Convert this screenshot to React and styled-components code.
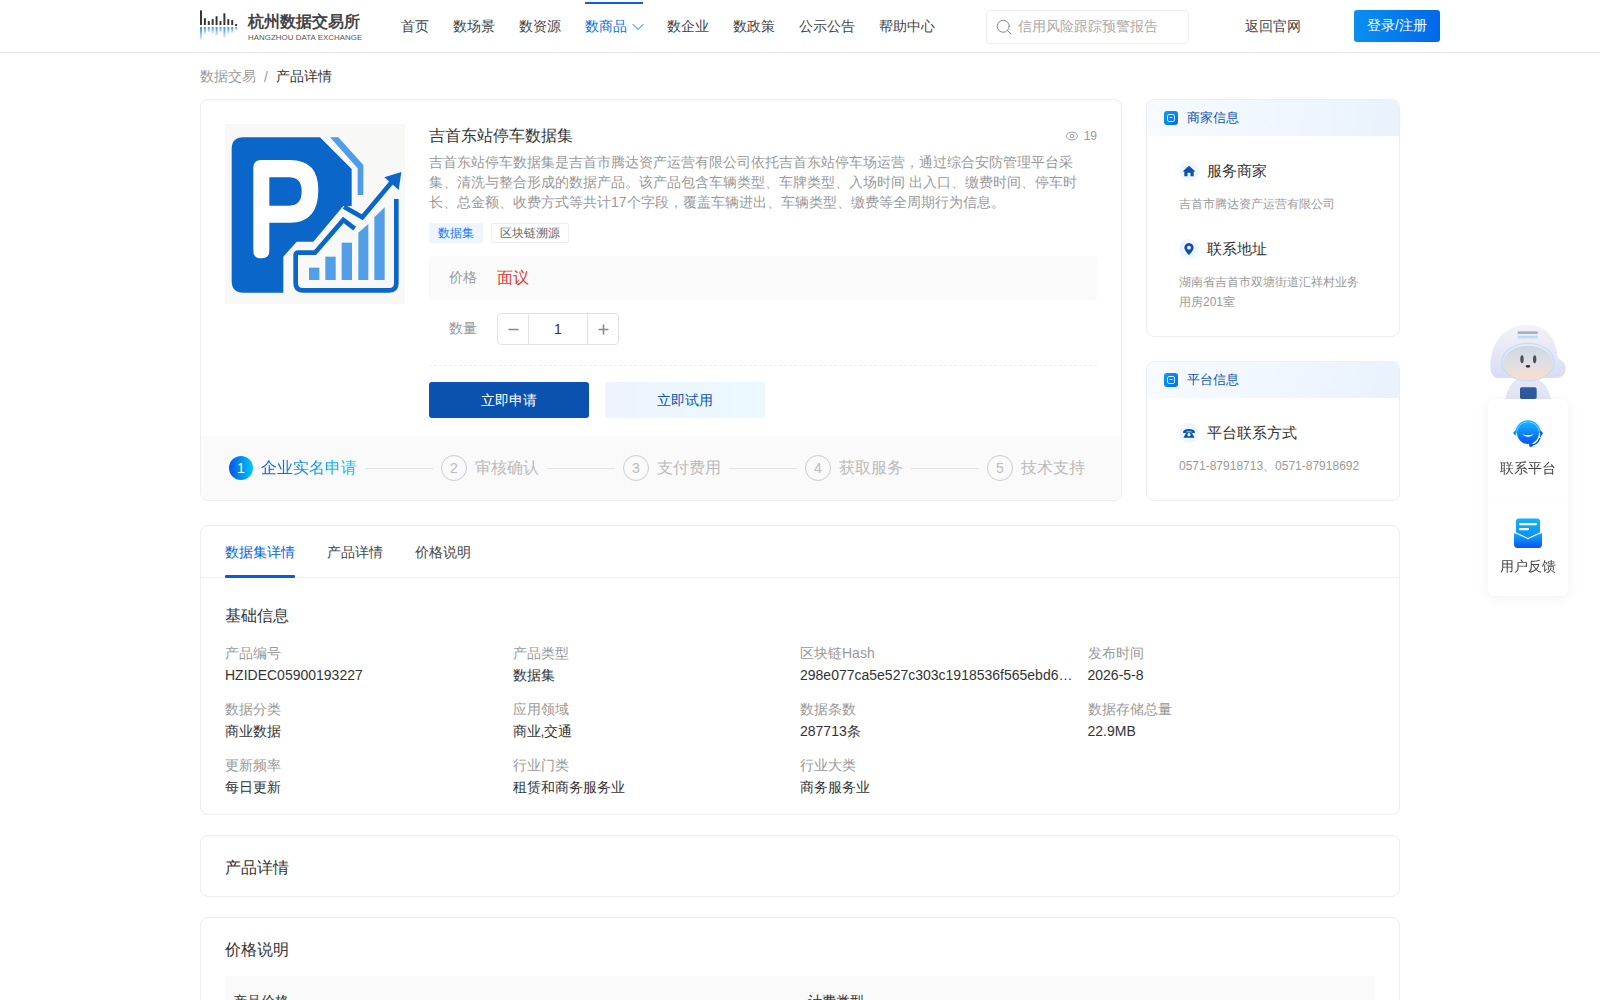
import React from 'react';
import styled, { createGlobalStyle } from 'styled-components';
import { Search, ChevronDown, Eye, Minus, Plus } from 'lucide-react';

const Global = createGlobalStyle`
  html, body { margin: 0; padding: 0; background: #fff; }
  body { font-family: "Liberation Sans", sans-serif; color: #333; font-size: 14px; }
  * { box-sizing: border-box; }
`;

const Header = styled.header`
  height: 53px; border-bottom: 1px solid #e8e8e8; background: #fff;
`;
const HeaderInner = styled.div`
  width: 1240px; margin-left: 200px; height: 52px; display: flex; align-items: center;
`;
const Logo = styled.div`
  width: 162px; height: 30px; display: flex; gap: 8px; margin-top: -3px; flex: none;
`;
const LogoText = styled.div`
  display: flex; flex-direction: column; width: 114px; white-space: nowrap; margin-top: 2px;
`;
const LogoCn = styled.span`
  font-size: 16.4px; line-height: 19px; font-weight: 700; color: #444;
`;
const LogoEn = styled.span`
  font-size: 7.9px; line-height: 11px; color: #555; margin-top: 1px; letter-spacing: 0.05px;
`;
const Nav = styled.nav`
  display: flex; gap: 24px; margin-left: 39px; height: 52px;
`;
const NavItem = styled.a`
  display: flex; align-items: center; height: 52px; padding-top: 2px; font-size: 14px; color: ${p => p.$active ? '#0a6fe8' : '#444'};
  position: relative; white-space: nowrap;
  & > svg { margin: 0 -5px 0 1px; }
  ${p => p.$active ? `&::before { content: ""; position: absolute; left: 0; right: 0; top: 2px; height: 2px; background: #0a62dc; }` : ''}
`;
const SearchBox = styled.div`
  width: 203px; height: 34px; margin-left: 51px; margin-top: 1px; border: 1px solid #f0f0f0; border-radius: 4px;
  display: flex; align-items: center; gap: 5px; padding: 1px 0 0 8px; color: #aaa; font-size: 14px; white-space: nowrap; flex: none;
`;
const BackLink = styled.a`
  margin: 2px 0 0 56px; font-size: 14px; color: #444; white-space: nowrap; flex: none;
`;
const LoginBtn = styled.button`
  margin-left: 53px; width: 86px; height: 32px; border: 0; border-radius: 3px; color: #fff; font: inherit; font-size: 14px; margin-top: -1px;
  background: linear-gradient(90deg, #0a8ff0, #0068ea); flex: none;
`;
const Container = styled.main`
  width: 1200px; margin: 0 auto;
`;
const Crumbs = styled.div`
  height: 46px; padding-top: 2px; display: flex; align-items: center; font-size: 14px; color: #999; gap: 8px;
`;
const CrumbNow = styled.span` color: #333; `;
const TopRow = styled.section`
  display: flex; gap: 24px; height: 402px;
`;
const MainCard = styled.div`
  width: 922px; border: 1px solid #eee; border-radius: 8px; overflow: hidden; display: flex; flex-direction: column;
`;
const Product = styled.div`
  padding: 24px 24px 0; display: flex; gap: 24px; flex: 1;
`;
const Cover = styled.svg`
  width: 180px; height: 180px; flex: none; display: block;
`;
const Info = styled.div`
  flex: 1; min-width: 0;
`;
const TitleRow = styled.div`
  display: flex; justify-content: space-between; align-items: center; height: 24px;
`;
const Title = styled.h1`
  margin: 0; font-size: 16px; font-weight: 400; color: #333; line-height: 24px;
`;
const Views = styled.span`
  display: flex; align-items: center; gap: 5px; font-size: 12px; color: #999;
`;
const Desc = styled.p`
  margin: 4px 0 0; color: #999; font-size: 14px; line-height: 20px;
`;
const Tags = styled.div`
  display: flex; gap: 8px; margin-top: 11px;
`;
const Tag = styled.span`
  height: 20px; line-height: ${p => p.$blue ? '20px' : '18px'}; padding: 0 ${p => p.$blue ? '9px' : '8px'}; font-size: 12px; border-radius: 2px;
  background: ${p => p.$blue ? '#eef5ff' : '#fff'}; color: ${p => p.$blue ? '#1677ff' : '#666'};
  border: ${p => p.$blue ? '0' : '1px solid #eee'};
`;
const PriceBox = styled.div`
  margin-top: 13px; height: 44px; background: #fafafa; border-radius: 4px; display: flex; align-items: center; padding-left: 20px; gap: 20px;
`;
const Label = styled.span`
  color: #999; font-size: 14px; width: 28px; flex: none; white-space: nowrap;
`;
const Price = styled.span`
  color: #d93a2f; font-size: 16px;
`;
const QtyRow = styled.div`
  margin-top: 13px; display: flex; align-items: center; gap: 20px; padding-left: 20px;
`;
const Stepper = styled.div`
  width: 122px; height: 32px; border: 1px solid #e2e2e2; border-radius: 4px; display: flex; align-items: stretch;
`;
const StepBtn = styled.span`
  width: 30px; display: flex; align-items: center; justify-content: center; color: #888; flex: none;
`;
const StepVal = styled.span`
  flex: 1; border-left: 1px solid #e2e2e2; border-right: 1px solid #e2e2e2; text-align: center; line-height: 30px; font-size: 14px; color: #333;
`;
const Dash = styled.div`
  margin-top: 20px; border-top: 1px dashed #eee;
`;
const Actions = styled.div`
  margin-top: 16px; display: flex; gap: 16px;
`;
const ActionBtn = styled.button`
  width: 160px; height: 36px; border: 0; border-radius: 3px; font: inherit; font-size: 14px; padding: 2px 0 0;
  color: ${p => p.$primary ? '#fff' : '#0a52ae'};
  background: ${p => p.$primary ? '#0a52ae' : 'linear-gradient(90deg, #eef3fd, #ebfaff)'};
`;
const Steps = styled.div`
  height: 64px; background: #fafafa; display: flex; align-items: center; padding-left: 28px; flex: none;
`;
const StepCircle = styled.span`
  width: ${p => p.$on ? '24px' : '26px'}; height: ${p => p.$on ? '24px' : '26px'}; border-radius: 50%; flex: none;
  display: flex; align-items: center; justify-content: center; font-size: 14px;
  color: ${p => p.$on ? '#fff' : '#bbb'};
  border: ${p => p.$on ? '0' : '1px solid #ccc'};
  background: ${p => p.$on ? 'linear-gradient(90deg, #0a55e0, #00c8ff)' : 'transparent'};
`;
const StepText = styled.span`
  margin-left: 8px; font-size: 16px; white-space: nowrap;
  color: ${p => p.$on ? 'transparent' : '#bbb'};
  ${p => p.$on ? 'background: linear-gradient(90deg, #0a55e0, #00c8ff); -webkit-background-clip: text; background-clip: text;' : ''}
`;
const StepLine = styled.span`
  width: 68px; height: 1px; background: #e2e2e2; margin: 0 8px; flex: none;
`;
const Side = styled.aside`
  width: 254px; display: flex; flex-direction: column; gap: 24px;
`;
const SideCard = styled.div`
  border: 1px solid #eee; border-radius: 8px; overflow: hidden; flex: ${p => p.$grow ? 1 : 'none'}; height: ${p => p.$h || 'auto'};
`;
const SideHead = styled.div`
  height: 36px; background: linear-gradient(100deg, #f7fbff, #e9f2fd); display: flex; align-items: center; padding-left: 17px; gap: 9px;
  font-size: 13px; color: #0a52ae;
`;
const SideBody = styled.div`
  padding: 25px 40px 0 32px;
`;
const ItemHead = styled.div`
  display: flex; align-items: center; gap: 8px; font-size: 15px; color: #333; height: 20px; margin-top: ${p => p.$mt || 0};
`;
const ItemIcon = styled.span`
  width: 20px; height: 20px; border-radius: 50%; background: #f0f6fe; display: flex; align-items: center; justify-content: center; flex: none;
`;
const ItemText = styled.p`
  margin: 13px 0 0; font-size: 12px; line-height: 20px; color: #999; white-space: ${p => p.$nowrap ? 'nowrap' : 'normal'};
`;
const Card = styled.section`
  border: 1px solid #eee; border-radius: 8px; margin-top: ${p => p.$mt}; padding: ${p => p.$pad || '0'};
`;
const TabBar = styled.div`
  height: 52px; border-bottom: 1px solid #eee; display: flex; gap: 32px; padding-left: 24px;
`;
const Tab = styled.span`
  height: 52px; line-height: 52px; font-size: 14px; position: relative; color: ${p => p.$on ? '#0a62dc' : '#444'};
  ${p => p.$on ? `&::after { content: ""; position: absolute; left: 0; right: 0; bottom: 0; height: 3px; background: #0a5ae0; border-radius: 1px; }` : ''}
`;
const TabBody = styled.div`
  padding: 26px 24px 16px;
`;
const Heading = styled.h2`
  margin: 0; font-size: 16px; font-weight: 400; line-height: 24px; color: #333;
`;
const Facts = styled.div`
  margin-top: 14px; display: grid; grid-template-columns: repeat(4, 1fr); row-gap: 12px;
`;
const Fact = styled.div`
  min-width: 0;
`;
const FactLabel = styled.div`
  font-size: 14px; line-height: 22px; color: #999;
`;
const FactValue = styled.div`
  font-size: 14px; line-height: 22px; color: #333; white-space: nowrap;
`;
const PriceTable = styled.div`
  margin-top: 14px; background: #fafafa; display: grid; grid-template-columns: 575px 1fr; padding: 14px 8px 10px; row-gap: 10px; font-size: 14px; line-height: 22px; color: #333;
`;
const Float = styled.div`
  position: fixed; right: 32px; top: 323px; width: 80px; display: flex; flex-direction: column;
`;
const Robot = styled.svg`
  width: 80px; height: 76px; display: block;
`;
const FloatCard = styled.div`
  background: #fff; border-radius: 6px; box-shadow: 0 2px 14px rgba(0,0,0,.06);
`;
const FloatItem = styled.div`
  height: 98.5px; display: flex; flex-direction: column; align-items: center; padding-top: ${p => p.$pt}; gap: ${p => p.$gap}; font-size: 14px; color: #444;
  & + & { box-shadow: 0 -1px 3px rgba(0,0,0,.015); }
`;
const FloatIcon = styled.svg`
  width: 32px; height: 32px; display: block; flex: none;
`;

const facts = [
  ['产品编号', 'HZIDEC05900193227'], ['产品类型', '数据集'], ['区块链Hash', '298e077ca5e527c303c1918536f565ebd6…'], ['发布时间', '2026-5-8'],
  ['数据分类', '商业数据'], ['应用领域', '商业,交通'], ['数据条数', '287713条'], ['数据存储总量', '22.9MB'],
  ['更新频率', '每日更新'], ['行业门类', '租赁和商务服务业'], ['行业大类', '商务服务业'],
];
const navs = ['首页', '数场景', '数资源', '数商品', '数企业', '数政策', '公示公告', '帮助中心'];
const steps = ['企业实名申请', '审核确认', '支付费用', '获取服务', '技术支持'];

const bars = [[0,0],[4,8],[8,11],[12,9],[16,6],[20,11],[24,3],[28,9],[32,10],[36,14]];

const LogoMark = () => (
  <svg width="41" height="30" viewBox="0 0 41 30">
    <defs>
      <linearGradient id="lg1" x1="0" y1="0" x2="0" y2="1"><stop offset="0" stopColor="#2f8df5"/><stop offset="1" stopColor="#d9ecff"/></linearGradient>
    </defs>
    {bars.map(([x, y], i) => <rect key={i} x={x} y={y} width="2" height={Math.max(2, 15 - y)} fill="#333" />)}
    {bars.map(([x, y], i) => <rect key={i} x={x} y="17" width="2" height={Math.max(3, 13 - y * 0.7)} fill="url(#lg1)" />)}
  </svg>
);

const CoverArt = () => (
  <Cover viewBox="75 72 540 540">
    <rect x="75" y="72" width="540" height="540" fill="#f8f8f6" />
    <path d="M130 112H360L455 207V318L430 318L340 425H290L250 470V578H130Q95 578 95 543V147Q95 112 130 112Z" fill="#0a66c8" />
    <path d="M390 112H415L490 195V285H473V205Z" fill="#4f9de8" />
    <path fillRule="evenodd" d="M184 180H270Q355 180 355 270Q355 368 270 368H208V452Q208 475 184 475Q160 475 160 452V204Q160 180 184 180ZM208 232V317H268Q305 317 305 274Q305 232 268 232Z" fill="#fff" />
    <path d="M432 320L487 352L585 235" fill="none" stroke="#0a66c8" strokeWidth="14" />
    <path d="M553 232L604 216L596 270Z" fill="#0a66c8" />
    <path d="M589 297V550Q589 571 568 571H308Q287 571 287 550V466Q287 458 296 458H345L430 360L464 386" fill="none" stroke="#0a66c8" strokeWidth="14" />
    <rect x="327" y="503" width="31" height="37" fill="#529fe8" />
    <rect x="376" y="470" width="31" height="70" fill="#529fe8" />
    <rect x="425" y="428" width="31" height="112" fill="#529fe8" />
    <path d="M475 398L505 372V540H475Z" fill="#529fe8" />
    <path d="M523 352L554 322V540H523Z" fill="#529fe8" />
  </Cover>
);

const SquareIcon = ({ id }) => (
  <svg width="14" height="14" viewBox="0 0 14 14">
    <defs><linearGradient id={id} x1="0" y1="0" x2="1" y2="1"><stop offset="0" stopColor="#0a9cf5"/><stop offset="1" stopColor="#0a6ce8"/></linearGradient></defs>
    <rect width="14" height="14" rx="3" fill={`url(#${id})`} />
    <rect x="3.5" y="3.5" width="7" height="7" rx="1.5" fill="none" stroke="#cfe6ff" strokeWidth="1" />
    <rect x="5.5" y="6" width="3" height="1" fill="#cfe6ff" />
  </svg>
);

const House = () => (
  <svg width="14" height="14" viewBox="0 0 24 24"><path d="M12 3L23 13H20V21H14.5V15H9.5V21H4V13H1Z" fill="#0a52ae" /></svg>
);
const Pin = () => (
  <svg width="14" height="14" viewBox="0 0 24 24"><path fillRule="evenodd" d="M12 1.5C7 1.5 4 5.2 4 9.5C4 15 12 22.5 12 22.5S20 15 20 9.5C20 5.2 17 1.5 12 1.5ZM12 6.5A3.2 3.2 0 1 1 12 12.9A3.2 3.2 0 0 1 12 6.5Z" fill="#0a52ae" /></svg>
);
const Phone = () => (
  <svg width="14" height="14" viewBox="0 0 24 24">
    <path fillRule="evenodd" d="M2 9C5 4 19 4 22 9V12H16.5V9.5H7.5V12H2ZM7 12L8.5 10.5H15.5L17 12L21 19V20H3V19ZM12 12A2.8 2.8 0 1 0 12 17.6A2.8 2.8 0 0 0 12 12Z" fill="#0a52ae" />
  </svg>
);

const RobotArt = () => (
  <Robot viewBox="143 45 240 228">
    <defs>
      <linearGradient id="rb1" x1="0" y1="0" x2="0" y2="1"><stop offset="0" stopColor="#f3f3f7"/><stop offset="1" stopColor="#d8dcf4"/></linearGradient>
      <linearGradient id="rb2" x1="0" y1="0" x2="0" y2="1"><stop offset="0" stopColor="#cdd6e2"/><stop offset=".5" stopColor="#dfdfe4"/><stop offset="1" stopColor="#fcdccb"/></linearGradient>
    </defs>
    <path d="M195 273Q205 225 232 214H292Q320 225 332 273Z" fill="#e3e6f6" />
    <rect x="239" y="238" width="50" height="35" rx="5" fill="#2e5a9e" />
    <path d="M170 210Q148 205 150 170Q152 110 190 75Q235 40 295 55Q345 75 352 150Q380 165 376 188Q370 210 345 210Z" fill="url(#rb1)" />
    <ellipse cx="263" cy="162" rx="78" ry="56" fill="none" stroke="#bfe0f8" strokeWidth="4" />
    <ellipse cx="263" cy="165" rx="74" ry="52" fill="url(#rb2)" />
    <ellipse cx="245" cy="154" rx="5" ry="12" fill="#4a4f5a" />
    <ellipse cx="283" cy="154" rx="5" ry="12" fill="#4a4f5a" />
    <ellipse cx="263" cy="175" rx="7" ry="4" fill="#333" />
    <rect x="232" y="70" width="60" height="8" fill="#8a93a8" opacity=".7" />
    <rect x="232" y="83" width="60" height="8" fill="#9ad0f5" opacity=".6" />
  </Robot>
);

const Headset = () => (
  <FloatIcon viewBox="0 0 32 32">
    <defs><linearGradient id="hs" x1="0" y1="0" x2="0" y2="1"><stop offset="0" stopColor="#14b4ff"/><stop offset="1" stopColor="#0a55f0"/></linearGradient></defs>
    <circle cx="16" cy="16" r="11" fill="url(#hs)" />
    <path d="M4 16A12 12 0 0 1 28 16" fill="none" stroke="#14b4ff" strokeWidth="1.6" />
    <path d="M3.8 13L1 16L3.8 19Z" fill="#0a80f5" />
    <path d="M28.2 13L31 16L28 21Z" fill="#0a55f0" />
    <path d="M28 21Q25 28 19 28" fill="none" stroke="#0a55f0" strokeWidth="1.5" />
    <circle cx="19" cy="28" r="2" fill="#0a55f0" />
    <path d="M10 17Q16 23 22 17Q16 19.5 10 17Z" fill="#fff" />
  </FloatIcon>
);
const Mail = () => (
  <FloatIcon viewBox="0 0 32 32">
    <defs>
      <linearGradient id="ml1" x1="0" y1="0" x2="0" y2="1"><stop offset="0" stopColor="#10b4ff"/><stop offset="1" stopColor="#0a84f5"/></linearGradient>
      <linearGradient id="ml2" x1="0" y1="0" x2="0" y2="1"><stop offset="0" stopColor="#14aaff"/><stop offset="1" stopColor="#0a52f0"/></linearGradient>
    </defs>
    <rect x="4" y="1.5" width="24" height="24" rx="3" fill="url(#ml1)" />
    <rect x="7" y="6" width="18" height="2.2" rx="1" fill="#fff" />
    <rect x="7" y="11" width="10" height="2.2" rx="1" fill="#fff" />
    <path d="M2 16L16 22.5L30 16V27Q30 31 26.5 31H5.5Q2 31 2 27Z" fill="url(#ml2)" />
    <path d="M2 15L16 21.5L30 15" fill="none" stroke="#fff" strokeWidth="1.2" />
  </FloatIcon>
);

export default function App() {
  return (
    <>
      <Global />
      <Header>
        <HeaderInner>
          <Logo>
            <LogoMark />
            <LogoText>
              <LogoCn>杭州数据交易所</LogoCn>
              <LogoEn>HANGZHOU DATA EXCHANGE</LogoEn>
            </LogoText>
          </Logo>
          <Nav>
            {navs.map(n => (
              <NavItem key={n} $active={n === '数商品'}>
                {n}{n === '数商品' && <ChevronDown size={20} strokeWidth={1.2} />}
              </NavItem>
            ))}
          </Nav>
          <SearchBox><Search size={18} strokeWidth={1.3} color="#888" />信用风险跟踪预警报告</SearchBox>
          <BackLink>返回官网</BackLink>
          <LoginBtn>登录/注册</LoginBtn>
        </HeaderInner>
      </Header>
      <Container>
        <Crumbs>数据交易<span>/</span><CrumbNow>产品详情</CrumbNow></Crumbs>
        <TopRow>
          <MainCard>
            <Product>
              <CoverArt />
              <Info>
                <TitleRow>
                  <Title>吉首东站停车数据集</Title>
                  <Views><Eye size={14} strokeWidth={1.5} />19</Views>
                </TitleRow>
                <Desc>吉首东站停车数据集是吉首市腾达资产运营有限公司依托吉首东站停车场运营，通过综合安防管理平台采集、清洗与整合形成的数据产品。该产品包含车辆类型、车牌类型、入场时间 出入口、缴费时间、停车时长、总金额、收费方式等共计17个字段，覆盖车辆进出、车辆类型、缴费等全周期行为信息。</Desc>
                <Tags><Tag $blue>数据集</Tag><Tag>区块链溯源</Tag></Tags>
                <PriceBox><Label>价格</Label><Price>面议</Price></PriceBox>
                <QtyRow>
                  <Label>数量</Label>
                  <Stepper>
                    <StepBtn><Minus size={15} strokeWidth={2.5} /></StepBtn>
                    <StepVal>1</StepVal>
                    <StepBtn><Plus size={15} strokeWidth={2.5} /></StepBtn>
                  </Stepper>
                </QtyRow>
                <Dash />
                <Actions>
                  <ActionBtn $primary>立即申请</ActionBtn>
                  <ActionBtn>立即试用</ActionBtn>
                </Actions>
              </Info>
            </Product>
            <Steps>
              {steps.map((s, i) => (
                <React.Fragment key={s}>
                  <StepCircle $on={i === 0}>{i + 1}</StepCircle>
                  <StepText $on={i === 0}>{s}</StepText>
                  {i < 4 && <StepLine />}
                </React.Fragment>
              ))}
            </Steps>
          </MainCard>
          <Side>
            <SideCard $h="238px">
              <SideHead><SquareIcon id="sq1" />商家信息</SideHead>
              <SideBody>
                <ItemHead><ItemIcon><House /></ItemIcon>服务商家</ItemHead>
                <ItemText>吉首市腾达资产运营有限公司</ItemText>
                <ItemHead $mt="25px"><ItemIcon><Pin /></ItemIcon>联系地址</ItemHead>
                <ItemText>湖南省吉首市双塘街道汇祥村业务用房201室</ItemText>
              </SideBody>
            </SideCard>
            <SideCard $grow>
              <SideHead><SquareIcon id="sq2" />平台信息</SideHead>
              <SideBody>
                <ItemHead><ItemIcon><Phone /></ItemIcon>平台联系方式</ItemHead>
                <ItemText $nowrap>0571-87918713、0571-87918692</ItemText>
              </SideBody>
            </SideCard>
          </Side>
        </TopRow>
        <Card $mt="24px">
          <TabBar>
            <Tab $on>数据集详情</Tab>
            <Tab>产品详情</Tab>
            <Tab>价格说明</Tab>
          </TabBar>
          <TabBody>
            <Heading>基础信息</Heading>
            <Facts>
              {facts.map(([k, v]) => (
                <Fact key={k}><FactLabel>{k}</FactLabel><FactValue>{v}</FactValue></Fact>
              ))}
            </Facts>
          </TabBody>
        </Card>
        <Card $mt="20px" $pad="20px 24px 16px"><Heading>产品详情</Heading></Card>
        <Card $mt="20px" $pad="20px 24px 24px">
          <Heading>价格说明</Heading>
          <PriceTable>
            <span>产品价格</span><span>计费类型</span>
            <span>面议</span><span>按次计费</span>
          </PriceTable>
        </Card>
      </Container>
      <Float>
        <RobotArt />
        <FloatCard>
          <FloatItem $pt="18px" $gap="11px"><Headset />联系平台</FloatItem>
          <FloatItem $pt="19px" $gap="9px"><Mail />用户反馈</FloatItem>
        </FloatCard>
      </Float>
    </>
  );
}
